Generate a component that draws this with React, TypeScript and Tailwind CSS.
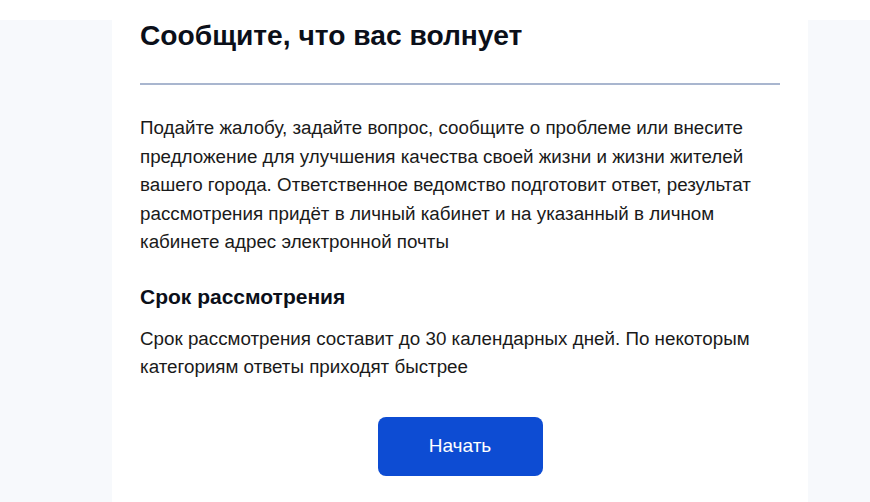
export default function App() {
  return (
    <div className="w-[870px] h-[502px] overflow-hidden bg-white flex flex-col" style={{ fontFamily: '"Liberation Sans", Arial, sans-serif' }}>
      <div className="h-5 bg-white shrink-0 shadow-[0_1px_2px_rgba(0,0,0,0.02)]" />
      <div className="flex flex-1">
        <div className="w-[112px] bg-[#f7f9fc]" />
        <div className="w-[696px] bg-white pl-7 pr-7">
          <h1 className="text-[28.2px] leading-[31px] font-bold text-[#0b0f19]">Сообщите, что вас волнует</h1>
          <div className="mt-[32px] h-[2px] w-[640px] bg-[#a9b6cf]" />
          <p className="mt-[29px] text-[18.8px] leading-[28.6px] text-[#1a1a1a] w-[640px]">
            Подайте жалобу, задайте вопрос, сообщите о проблеме или внесите предложение для улучшения качества своей жизни и жизни жителей вашего города. Ответственное ведомство подготовит ответ, результат рассмотрения придёт в личный кабинет и на указанный в личном кабинете адрес электронной почты
          </p>
          <h2 className="mt-[26px] text-[21px] leading-[28px] font-bold text-[#0b0f19]">Срок рассмотрения</h2>
          <p className="mt-[14px] text-[18.8px] leading-[28px] text-[#1a1a1a] w-[640px]">
            Срок рассмотрения составит до 30 календарных дней. По некоторым категориям ответы приходят быстрее
          </p>
          <div className="flex justify-center w-[640px] mt-[36px]">
            <button className="w-[165px] h-[59px] rounded-lg bg-[#0d4cd3] text-white text-[19px]">Начать</button>
          </div>
        </div>
        <div className="flex-1 bg-[#f7f9fc]" />
      </div>
    </div>
  );
}
